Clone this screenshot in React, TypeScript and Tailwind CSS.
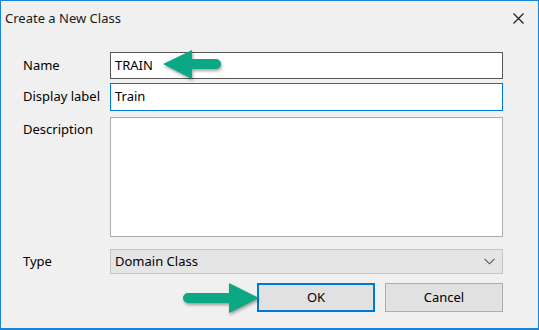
import React from "react";

const font = { fontFamily: '"Noto Sans", "Open Sans", Arial, sans-serif' };

function LeftArrow() {
  return (
    <svg
      className="absolute left-[158px] top-[45px]"
      width="70"
      height="38"
      viewBox="0 0 70 38"
      style={{ filter: "drop-shadow(1px 2px 1.5px rgba(0,0,0,0.35))" }}
    >
      <path
        d="M4 18 L33 4 L33 13 L57 13 A5 5 0 0 1 57 23 L33 23 L33 33 Z"
        fill="#0aa884"
      />
    </svg>
  );
}

function RightArrow() {
  return (
    <svg
      className="absolute left-[178px] top-[278px]"
      width="86"
      height="40"
      viewBox="0 0 86 40"
      style={{ filter: "drop-shadow(1px 2px 1.5px rgba(0,0,0,0.35))" }}
    >
      <path
        d="M80 19 L50 4 L50 14 L9 14 A5 5 0 0 0 9 24 L50 24 L50 34 Z"
        fill="#0aa884"
      />
    </svg>
  );
}

export default function App() {
  return (
    <div
      className="relative w-[539px] h-[330px] bg-[#f0f0f0] border border-b-2 border-[#1883d7] text-[13px] text-black"
      style={font}
    >
      <div className="h-[35px] flex items-center justify-between pl-[4px] pr-[14px]">
        <span className="text-[13px] text-[#1a1a1a]">Create a New Class</span>
        <svg width="11" height="11" viewBox="0 0 11 11">
          <path d="M0.5 0.5 L10.5 10.5 M10.5 0.5 L0.5 10.5" stroke="#222" strokeWidth="1.3" />
        </svg>
      </div>
      <div className="pt-[16px] pl-[22px] pr-[35px] flex flex-col">
        <div className="flex items-center h-[27px]">
          <span className="w-[87px]">Name</span>
          <div className="flex-1 h-full bg-white border border-[#555] flex items-center pl-[4px]">
            TRAIN
          </div>
        </div>
        <div className="flex items-center h-[28px] mt-[4px]">
          <span className="w-[87px]">Display label</span>
          <div className="flex-1 h-full bg-white border border-[#0078d7] flex items-center pl-[4px]">
            Train
          </div>
        </div>
        <div className="flex items-start h-[120px] mt-[6px]">
          <span className="w-[87px] mt-[3px]">Description</span>
          <div className="flex-1 h-full bg-white border border-[#ababab]" />
        </div>
        <div className="flex items-center h-[25px] mt-[12px]">
          <span className="w-[87px]">Type</span>
          <div className="flex-1 h-full bg-[#e5e5e5] border border-[#c4c4c4] flex items-center justify-between pl-[4px] pr-[7px]">
            <span>Domain Class</span>
            <svg width="11" height="7" viewBox="0 0 11 7">
              <path d="M0.5 0.8 L5.5 5.8 L10.5 0.8" stroke="#555" strokeWidth="1.1" fill="none" />
            </svg>
          </div>
        </div>
        <div className="flex justify-end gap-[10px] mt-[9px]">
          <div className="w-[118px] h-[29px] bg-[#e1e1e1] border-2 border-[#0078d7] flex items-center justify-center">
            OK
          </div>
          <div className="w-[118px] h-[29px] bg-[#e1e1e1] border border-[#adadad] flex items-center justify-center">
            Cancel
          </div>
        </div>
      </div>
      <LeftArrow />
      <RightArrow />
    </div>
  );
}
